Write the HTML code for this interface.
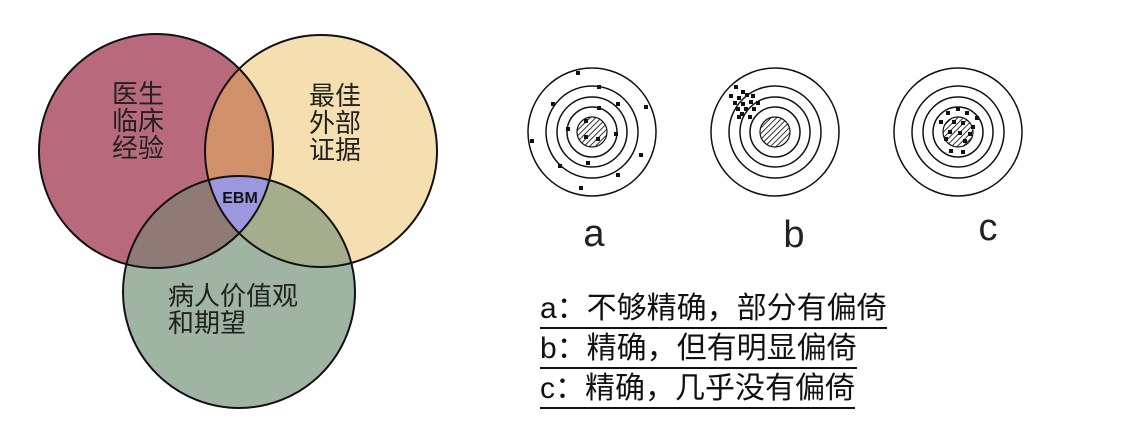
<!DOCTYPE html>
<html><head><meta charset="utf-8"><style>
html,body{margin:0;padding:0;background:#fff;width:1138px;height:448px;overflow:hidden}
svg{position:absolute;left:0;top:0}
.t{position:absolute;left:540px;font-family:"Liberation Sans","Noto Sans CJK SC",sans-serif;font-size:30px;color:#111;line-height:36px;white-space:nowrap;border-bottom:2px solid #111;}
</style></head><body>
<svg width="1138" height="448" xmlns="http://www.w3.org/2000/svg">
<defs>
<clipPath id="cr"><circle cx="156" cy="151" r="117"/></clipPath>
<clipPath id="cy"><circle cx="321" cy="151" r="116"/></clipPath>
<clipPath id="cg"><circle cx="239" cy="292" r="116"/></clipPath>
<pattern id="h" width="4" height="4" patternUnits="userSpaceOnUse" patternTransform="rotate(45)"><rect width="4" height="4" fill="#fff"/><line x1="0" y1="0" x2="0" y2="4" stroke="#000" stroke-width="1.6"/></pattern>
</defs>
<circle cx="156" cy="151" r="117" fill="#b86a7c"/>
<circle cx="321" cy="151" r="116" fill="#f5deb0"/>
<circle cx="239" cy="292" r="116" fill="#9fb4a3"/>
<g clip-path="url(#cr)"><circle cx="321" cy="151" r="116" fill="#d0916a"/><circle cx="239" cy="292" r="116" fill="#8f7a76"/></g>
<g clip-path="url(#cy)"><circle cx="239" cy="292" r="116" fill="#a5ae8c"/></g>
<g clip-path="url(#cr)"><g clip-path="url(#cy)"><circle cx="239" cy="292" r="116" fill="#9d98de"/></g></g>
<g fill="none" stroke="#111" stroke-width="2">
<circle cx="156" cy="151" r="117"/><circle cx="321" cy="151" r="116"/><circle cx="239" cy="292" r="116"/></g>
<g font-family="Liberation Sans,Noto Sans CJK SC,sans-serif" font-size="26" fill="#222">
<text x="112" y="103">医生</text><text x="112" y="130">临床</text><text x="112" y="157">经验</text>
<text x="309" y="105">最佳</text><text x="309" y="132">外部</text><text x="309" y="159">证据</text>
<text x="168" y="305">病人价值观</text><text x="168" y="332">和期望</text>
</g>
<text x="240" y="203" text-anchor="middle" font-family="Liberation Sans,sans-serif" font-weight="bold" font-size="16" fill="#111">EBM</text>

<g fill="none" stroke="#111" stroke-width="1.5">
<circle cx="592" cy="132" r="64"/><circle cx="592" cy="132" r="46"/><circle cx="592" cy="132" r="35"/><circle cx="592" cy="132" r="25"/>
<circle cx="775" cy="132" r="64"/><circle cx="775" cy="132" r="46"/><circle cx="775" cy="132" r="35"/><circle cx="775" cy="132" r="25"/>
<circle cx="958" cy="132" r="64"/><circle cx="958" cy="132" r="46"/><circle cx="958" cy="132" r="35"/><circle cx="958" cy="132" r="25"/>
</g>
<g stroke="#111" stroke-width="1.2">
<circle cx="592" cy="132" r="15" fill="url(#h)"/><circle cx="775" cy="132" r="15" fill="url(#h)"/><circle cx="958" cy="132" r="15" fill="url(#h)"/>
</g>
<g fill="#111">
<rect x="576" y="71" width="4" height="4"/><rect x="597" y="85" width="4" height="4"/><rect x="551" y="102" width="4" height="4"/><rect x="616" y="102" width="4" height="4"/><rect x="644" y="105" width="4" height="4"/><rect x="597" y="106" width="4" height="4"/><rect x="584" y="119" width="4" height="4"/><rect x="566" y="127" width="4" height="4"/><rect x="614" y="132" width="4" height="4"/><rect x="584" y="135" width="4" height="4"/><rect x="596" y="137" width="4" height="4"/><rect x="530" y="139" width="4" height="4"/><rect x="639" y="153" width="4" height="4"/><rect x="586" y="161" width="4" height="4"/><rect x="558" y="164" width="4" height="4"/><rect x="616" y="173" width="4" height="4"/><rect x="579" y="186" width="4" height="4"/>
<rect x="734" y="85" width="4" height="4"/><rect x="741" y="90" width="4" height="4"/><rect x="729" y="94" width="4" height="4"/><rect x="737" y="96" width="4" height="4"/><rect x="745" y="93" width="4" height="4"/><rect x="751" y="94" width="4" height="4"/><rect x="733" y="101" width="4" height="4"/><rect x="741" y="102" width="4" height="4"/><rect x="749" y="100" width="4" height="4"/><rect x="756" y="101" width="4" height="4"/><rect x="736" y="107" width="4" height="4"/><rect x="744" y="107" width="4" height="4"/><rect x="752" y="107" width="4" height="4"/><rect x="740" y="112" width="4" height="4"/><rect x="748" y="115" width="4" height="4"/><rect x="737" y="115" width="4" height="4"/>
<rect x="956" y="107" width="4" height="4"/><rect x="946" y="111" width="4" height="4"/><rect x="965" y="111" width="4" height="4"/><rect x="975" y="116" width="4" height="4"/><rect x="939" y="120" width="4" height="4"/><rect x="952" y="120" width="4" height="4"/><rect x="961" y="121" width="4" height="4"/><rect x="971" y="125" width="4" height="4"/><rect x="948" y="130" width="4" height="4"/><rect x="958" y="131" width="4" height="4"/><rect x="968" y="132" width="4" height="4"/><rect x="944" y="137" width="4" height="4"/><rect x="963" y="139" width="4" height="4"/><rect x="949" y="149" width="4" height="4"/><rect x="961" y="150" width="4" height="4"/>
</g>
<g font-family="Liberation Sans,DejaVu Sans,sans-serif" font-size="38" fill="#222" text-anchor="middle">
<text x="594" y="246">a</text><text x="794" y="247">b</text><text x="988" y="240">c</text></g>
</svg>
<div class="t" style="top:291px">a：不够精确，部分有偏倚</div>
<div class="t" style="top:331px">b：精确，但有明显偏倚</div>
<div class="t" style="top:371px">c：精确，几乎没有偏倚</div>
</body></html>
